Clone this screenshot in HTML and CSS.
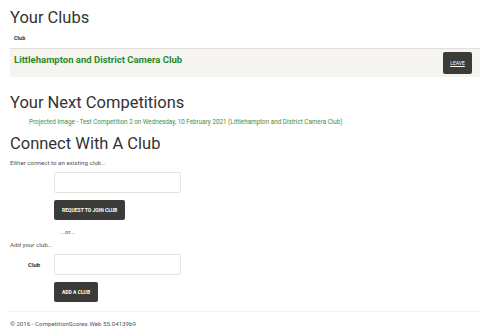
FILE: index.html
```html
<!DOCTYPE html>
<html lang="en">
<head>
    <meta charset="UTF-8">
    <meta name="viewport" content="width=device-width, initial-scale=1.0">
    <title>Clubs - CompetitionScores</title>
    <link rel="stylesheet" href="styles.css">
</head>
<body>
    <div class="container">
        <h1 class="first">Your Clubs</h1>
        <table class="clubs">
            <thead>
                <tr><th>Club</th><th></th></tr>
            </thead>
            <tbody>
                <tr>
                    <td class="club-name">Littlehampton and District Camera Club</td>
                    <td class="actions"><button class="btn btn-small"><u>LEAVE</u></button></td>
                </tr>
            </tbody>
        </table>

        <h1 class="next">Your Next Competitions</h1>
        <div class="competition">Projected Image - Test Competition 2 on Wednesday, 10 February 2021 (Littlehampton and District Camera Club)</div>

        <h1 class="connect">Connect With A Club</h1>
        <p class="hint">Either connect to an existing club...</p>
        <div class="form-row">
            <label></label>
            <input class="input-box" type="text">
        </div>
        <div class="form-row">
            <label></label>
            <button class="btn">REQUEST TO JOIN CLUB</button>
        </div>
        <p class="or-text">...or...</p>
        <p class="hint">Add your club...</p>
        <div class="form-row">
            <label>Club</label>
            <input class="input-box" type="text">
        </div>
        <div class="form-row">
            <label></label>
            <button class="btn">ADD A CLUB</button>
        </div>

        <footer>
            <p>&copy; 2016 - CompetitionScores.Web 55.04139b9</p>
        </footer>
    </div>
</body>
</html>
```

FILE: styles.css
```css
body {
    margin: 0;
    font-family: Roboto, "Liberation Sans", Arial, sans-serif;
    color: #333;
    background-color: #fff;
}
.container {
    padding: 0 0 0 10px;
}
h1 {
    font-size: 16.5px;
    font-weight: 400;
    line-height: 20px;
    margin: 0;
    color: #333;
}
h1.first {
    margin-top: 8px;
}
h1.next {
    margin-top: 16px;
}
h1.connect {
    margin-top: 8px;
}
.clubs {
    width: 470px;
    border-collapse: collapse;
}
.clubs th {
    text-align: left;
    font-size: 5.5px;
    font-weight: 700;
    line-height: 8px;
    padding: 0 4px;
    height: 20px;
    box-sizing: border-box;
    vertical-align: middle;
}
.clubs td {
    background-color: #f5f4f0;
    border-top: 1px solid #e2e0db;
    height: 29px;
    box-sizing: border-box;
    padding: 0 4px;
}
.club-name {
    color: #2a8a2a;
    font-weight: 700;
    font-size: 9.5px;
    line-height: 12px;
    vertical-align: top;
    padding-top: 5px !important;
}
.actions {
    text-align: right;
    vertical-align: top;
    padding: 3px 8px 0 0 !important;
}
.btn {
    background-color: #3b3b38;
    color: #fff;
    border: none;
    border-radius: 2px;
    font-family: inherit;
    font-size: 5px;
    font-weight: 700;
    height: 20px;
    padding: 0 8px;
    cursor: pointer;
    display: block;
}
.btn-small {
    width: 29px;
    height: 22px;
    padding: 0;
    font-weight: 400;
    margin-left: auto;
}
.btn:hover {
    background-color: #222;
}
.competition {
    color: #3e8e3e;
    font-size: 6.3px;
    line-height: 8px;
    margin: 5px 0 0 19px;
}
.hint {
    font-size: 6.2px;
    line-height: 8px;
    color: #555;
    margin: 5px 0 0;
}
.form-row {
    display: flex;
    align-items: center;
    margin-top: 5px;
}
.form-row + .form-row {
    margin-top: 7px;
}
.form-row label {
    width: 44px;
    padding-left: 18px;
    box-sizing: border-box;
    font-size: 6px;
    font-weight: 700;
}
.input-box {
    width: 127px;
    height: 21px;
    box-sizing: border-box;
    border: 1px solid #e3e3e3;
    border-radius: 2px;
    padding: 2px 4px;
    margin: 0;
}
.or-text {
    font-size: 6.2px;
    line-height: 8px;
    color: #555;
    margin: 8px 0 0 50px;
}
footer {
    border-top: 1px solid #f2f2f2;
    margin: 9px 0 0 -2px;
    padding: 8px 0 0 2px;
}
footer p {
    font-size: 6.2px;
    line-height: 8px;
    color: #555;
    margin: 0;
}
```
